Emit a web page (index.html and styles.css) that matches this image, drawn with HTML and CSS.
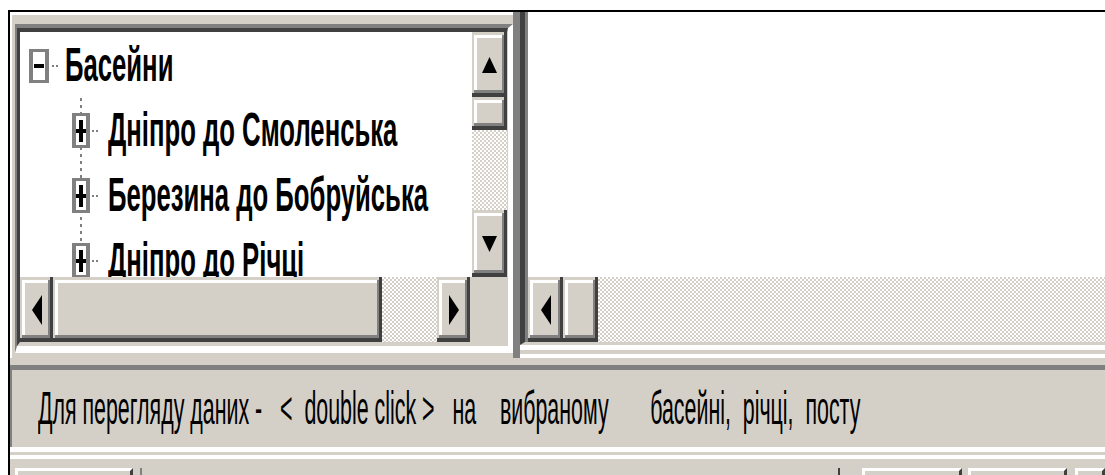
FILE: index.html
```html
<!DOCTYPE html>
<html lang="uk">
<head>
<meta charset="utf-8">
<title>Басейни</title>
<link rel="stylesheet" href="styles.css">
</head>
<body>
<div class="window">
  <div class="panes">
    <section class="tree-pane">
      <div class="sunken-outer">
        <div class="sunken-inner">
          <div class="tree-top">
            <div class="tree-view">
              <ul class="tree">
                <li class="root">
                  <div class="row">
                    <span class="expander"><svg class="glyph" width="10" height="4" viewBox="0 0 10 4"><rect width="10" height="4"/></svg></span>
                    <span class="dots"></span>
                    <span class="label">Басейни</span>
                  </div>
                  <ul class="children">
                    <li class="row child">
                      <span class="expander"><svg class="glyph" width="10" height="22" viewBox="0 0 10 22"><rect y="9" width="10" height="4"/><rect x="3" width="4" height="22"/></svg></span>
                      <span class="dots"></span>
                      <span class="label">Дніпро до Смоленська</span>
                    </li>
                    <li class="row child">
                      <span class="expander"><svg class="glyph" width="10" height="22" viewBox="0 0 10 22"><rect y="9" width="10" height="4"/><rect x="3" width="4" height="22"/></svg></span>
                      <span class="dots"></span>
                      <span class="label">Березина до Бобруйська</span>
                    </li>
                    <li class="row child">
                      <span class="expander"><svg class="glyph" width="10" height="22" viewBox="0 0 10 22"><rect y="9" width="10" height="4"/><rect x="3" width="4" height="22"/></svg></span>
                      <span class="dots"></span>
                      <span class="label">Дніпро до Річці</span>
                    </li>
                  </ul>
                </li>
              </ul>
            </div>
            <div class="vscroll">
              <div class="raised btn-up"><svg class="arrow" width="15" height="16" viewBox="0 0 15 16"><polygon points="7.5,0 15,16 0,16"/></svg></div>
              <div class="raised thumb-v"></div>
              <div class="track"></div>
              <div class="raised btn-down"><svg class="arrow" width="15" height="16" viewBox="0 0 15 16"><polygon points="0,0 15,0 7.5,16"/></svg></div>
            </div>
          </div>
          <div class="tree-bottom">
            <div class="hscroll">
              <div class="raised btn-h"><svg class="arrow" width="10" height="30" viewBox="0 0 10 30"><polygon points="10,0 10,30 0,15"/></svg></div>
              <div class="raised thumb-h"></div>
              <div class="track"></div>
              <div class="raised btn-h"><svg class="arrow" width="10" height="30" viewBox="0 0 10 30"><polygon points="0,0 10,15 0,30"/></svg></div>
            </div>
            <div class="corner"></div>
          </div>
        </div>
      </div>
    </section>
    <section class="detail-pane">
      <div class="detail-frame">
        <div class="detail-view"></div>
        <div class="hscroll">
          <div class="raised btn-h"><svg class="arrow" width="10" height="30" viewBox="0 0 10 30"><polygon points="10,0 10,30 0,15"/></svg></div>
          <div class="raised thumb-h"></div>
          <div class="track"></div>
        </div>
      </div>
      <div class="pane-foot"></div>
    </section>
  </div>
  <div class="pane-gap"></div>
  <div class="status"><span class="status-text">Для перегляду даних -   &lt;  double click &gt;   на    вибраному       басейні,  річці,  посту</span></div>
  <div class="status-foot"></div>
  <div class="toolbar">
    <div class="tool tool-wide"></div>
    <div class="tool-sep"></div>
    <div class="tool-gap"></div>
    <div class="tool-edge"></div>
    <div class="tool tool-a"></div>
    <div class="tool tool-b"></div>
    <div class="tool tool-c"></div>
  </div>
</div>
</body>
</html>
```

FILE: styles.css
```css
* { box-sizing: border-box; }

html, body { margin: 0; padding: 0; }

body {
  width: 1105px;
  height: 475px;
  overflow: hidden;
  background: #fff;
  color: #000;
  font-family: "Liberation Sans", Arial, sans-serif;
}

.window {
  margin: 10px 0 0 8px;
  border-top: 2px solid #000;
  border-left: 2px solid #000;
  background: #d4d0c8;
}

.panes {
  display: flex;
  height: 346px;
}

/* left pane: tree with scrollbars inside a sunken frame */
.tree-pane {
  width: 503px;
  flex: none;
  border-top: 3px solid #fff;
  border-left: 2px solid #fff;
  padding: 9px 0 5px 3px;
}

.sunken-outer {
  height: 100%;
  border-style: solid;
  border-width: 4px 5px 7px 2px;
  border-color: #808080 #fff #fff #808080;
}

.sunken-inner {
  height: 100%;
  border-style: solid;
  border-width: 4px 1px 4px 3px;
  border-color: #404040 #d4d0c8 #d4d0c8 #404040;
  display: flex;
  flex-direction: column;
}

.tree-top {
  display: flex;
  height: 245px;
  flex: none;
}

.tree-view {
  flex: 1;
  background: #fff;
  overflow: hidden;
  padding-top: 1px;
}

.tree-bottom {
  display: flex;
  height: 65px;
  flex: none;
}

.tree-bottom .hscroll {
  width: 450px;
  flex: none;
}

.corner {
  flex: 1;
  background: #d4d0c8;
}

/* scrollbars */
.vscroll {
  width: 35px;
  flex: none;
  display: flex;
  flex-direction: column;
}

.hscroll {
  display: flex;
  height: 65px;
  flex: none;
}

.track {
  flex: 1;
  background: repeating-conic-gradient(#d4d0c8 0 25%, #fff 0 50%) 0 0 / 4px 4px;
}

.raised {
  flex: none;
  display: flex;
  align-items: center;
  justify-content: center;
  background: #d4d0c8;
  box-shadow:
    inset -3px -4px 0 #404040,
    inset 2px 3px 0 #d4d0c8,
    inset -5px -7px 0 #808080,
    inset 5px 6px 0 #fff;
}

.arrow { display: block; fill: #000; }

.btn-up { height: 65px; }
.thumb-v { height: 33px; }
.btn-down { height: 67px; }
.btn-h { width: 33px; }
.thumb-h { width: 329px; }

/* tree nodes */
.tree, .children {
  list-style: none;
  margin: 0;
  padding: 0;
}

.children {
  background: repeating-linear-gradient(#808080 0 3px, transparent 3px 7px) 60px 0 / 2px 100% no-repeat;
}

.row {
  display: flex;
  align-items: center;
  height: 65px;
  white-space: nowrap;
}

.root > .row { padding-left: 9px; }
.child { padding-left: 52px; }

.expander {
  flex: none;
  display: flex;
  align-items: center;
  justify-content: center;
  background: #fff;
  border: solid #808080;
  border-width: 3px 4px;
}

.root .expander { width: 20px; height: 34px; }
.child .expander { width: 18px; height: 35px; }

.glyph { display: block; fill: #000; }

.dots {
  flex: none;
  width: 6px;
  height: 2px;
  background: repeating-linear-gradient(90deg, #808080 0 2px, transparent 2px 4px);
}

.root .dots { margin-left: 3px; }
.child .dots { margin-left: 2px; }

.label {
  display: inline-block;
  font-weight: bold;
  font-size: 25.7px;
  line-height: 1;
  transform: scaleY(1.85);
}

.root .label { margin-left: 7px; }
.child .label { margin-left: 10px; }

/* right pane */
.detail-pane {
  flex: 1;
  border-left: 7px solid #808080;
  display: flex;
  flex-direction: column;
}

.detail-frame {
  height: 333px;
  flex: none;
  border-left: 5px solid #404040;
  border-bottom: 3px solid #d4d0c8;
  padding-left: 3px;
  background: #808080;
  display: flex;
  flex-direction: column;
}

.detail-view {
  flex: 1;
  background: #fff;
}

.detail-frame .btn-h { width: 35px; }
.detail-frame .thumb-h { width: 35px; }

.pane-foot {
  flex: 1;
  background: linear-gradient(#fff 0 5px, #d4d0c8 5px 9px, #fff 9px 13px);
}

.pane-gap { height: 7px; }

/* status line */
.status {
  height: 82px;
  border-top: 5px solid #808080;
  border-left: 2px solid #808080;
  display: flex;
  align-items: center;
  padding: 4px 0 0 26px;
}

.status-text {
  display: inline-block;
  font-size: 21.4px;
  line-height: 1;
  white-space: pre;
  transform: scaleY(2.16);
}

.status-foot {
  height: 21px;
  background: linear-gradient(#fff 0 5px, #d4d0c8 5px 8px, #fff 8px 12px, #d4d0c8 12px);
}

/* bottom button row */
.toolbar {
  display: flex;
  height: 30px;
  padding-left: 5px;
}

.tool {
  flex: none;
  height: 30px;
  background: #d4d0c8;
  border-top: 3px solid #fff;
  border-left: 3px solid #fff;
  border-right: 3px solid #404040;
}

.tool-wide { width: 118px; }
.tool-sep { flex: none; width: 2px; margin-left: 7px; background: #808080; }
.tool-gap { flex: 1; }
.tool-edge { flex: none; width: 2px; background: #404040; }
.tool-a { width: 100px; margin-left: 22px; }
.tool-b { width: 99px; margin-left: 6px; }
.tool-c { width: 30px; margin-left: 8px; }
```
